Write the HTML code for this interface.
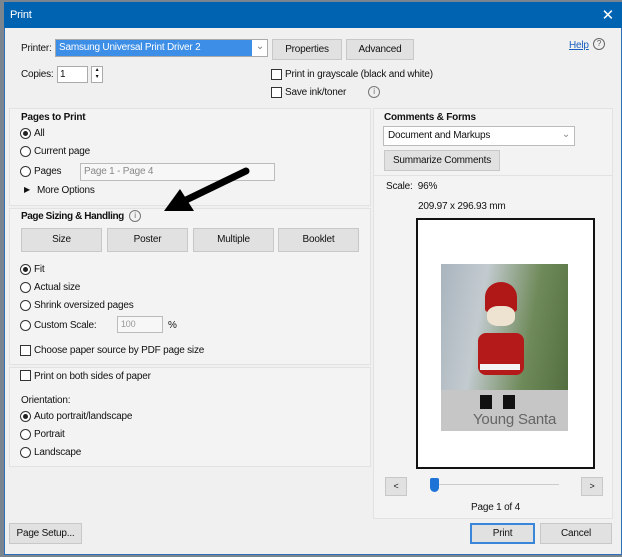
<!DOCTYPE html>
<html><head><style>
*{box-sizing:border-box;margin:0;padding:0}
body{width:622px;height:557px;background:#7a8590;font-family:"Liberation Sans",sans-serif;font-size:10px;letter-spacing:-0.2px;color:#111;position:relative;overflow:hidden}
.a{position:absolute}
.dlg{left:4px;top:2px;width:618px;height:553px;background:#f0f0f0;border:1px solid #2f6fb5}
.tb{left:4px;top:2px;width:618px;height:26px;background:#0063b1;color:#fff;font-size:11px;padding:7px 6px}
.panel{background:#f3f3f3;border:1px solid #e2e2e2}
.btn{background:#e1e1e1;border:1px solid #c8c8c8;text-align:center;line-height:20px}
.rad{width:11px;height:11px;border:1px solid #333;border-radius:50%;background:#fff}
.rad.on::after{content:"";position:absolute;left:2px;top:2px;width:5px;height:5px;border-radius:50%;background:#222}
.chk{width:11px;height:11px;border:1px solid #333;background:#fff}
.b{font-weight:bold}
</style></head><body>
<div class="a dlg"></div>
<div class="a tb">Print<span style="position:absolute;right:8px;top:4px;font-size:15px">✕</span></div>

<div class="a" style="left:21px;top:43px">Printer:</div>
<div class="a" style="left:55px;top:39px;width:213px;height:18px;background:#fff;border:1px solid #aaa"><div style="background:#3c8ee6;color:#fff;width:196px;height:16px;padding:2px 3px">Samsung Universal Print Driver 2</div><span class="a" style="right:3px;top:1px;color:#777">⌄</span></div>
<div class="a btn" style="left:272px;top:39px;width:70px;height:21px">Properties</div>
<div class="a btn" style="left:346px;top:39px;width:68px;height:21px">Advanced</div>
<div class="a" style="left:569px;top:40px;color:#1a5fc0;text-decoration:underline">Help</div>
<div class="a" style="left:593px;top:38px;width:12px;height:12px;border:1px solid #666;border-radius:50%;font-size:8px;text-align:center;line-height:10px;color:#555">?</div>

<div class="a" style="left:21px;top:69px">Copies:</div>
<div class="a" style="left:57px;top:66px;width:31px;height:17px;background:#fff;border:1px solid #aaa;padding:2px 2px">1</div>
<div class="a" style="left:91px;top:66px;width:12px;height:17px;background:#fff;border:1px solid #aaa;font-size:6px;text-align:center;line-height:7px">▴<br>▾</div>
<div class="a chk" style="left:271px;top:69px"></div><div class="a" style="left:285px;top:69px">Print in grayscale (black and white)</div>
<div class="a chk" style="left:271px;top:87px"></div><div class="a" style="left:285px;top:87px">Save ink/toner</div>
<div class="a" style="left:368px;top:86px;width:12px;height:12px;border:1px solid #777;border-radius:50%;font-size:8px;text-align:center;line-height:10px;color:#666">i</div>

<div class="a panel" style="left:9px;top:108px;width:362px;height:98px"></div>
<div class="a b" style="left:21px;top:112px">Pages to Print</div>
<div class="a rad on" style="left:20px;top:128px"></div><div class="a" style="left:34px;top:128px">All</div>
<div class="a rad" style="left:20px;top:146px"></div><div class="a" style="left:34px;top:146px">Current page</div>
<div class="a rad" style="left:20px;top:166px"></div><div class="a" style="left:34px;top:166px">Pages</div>
<div class="a" style="left:80px;top:163px;width:195px;height:18px;background:#f7f7f7;border:1px solid #bbb;padding:2px 3px;color:#888">Page 1 - Page 4</div>
<div class="a" style="left:24px;top:185px;font-size:8px">▶</div><div class="a" style="left:37px;top:185px">More Options</div>

<div class="a panel" style="left:9px;top:208px;width:362px;height:157px"></div>
<div class="a b" style="left:21px;top:211px;letter-spacing:-0.4px">Page Sizing &amp; Handling</div>
<div class="a" style="left:129px;top:210px;width:12px;height:12px;border:1px solid #777;border-radius:50%;font-size:8px;text-align:center;line-height:10px;color:#666">i</div>
<div class="a btn" style="left:21px;top:228px;width:81px;height:24px;line-height:22px">Size</div>
<div class="a btn" style="left:107px;top:228px;width:81px;height:24px;line-height:22px">Poster</div>
<div class="a btn" style="left:193px;top:228px;width:81px;height:24px;line-height:22px">Multiple</div>
<div class="a btn" style="left:278px;top:228px;width:81px;height:24px;line-height:22px">Booklet</div>
<div class="a rad on" style="left:20px;top:264px"></div><div class="a" style="left:34px;top:264px">Fit</div>
<div class="a rad" style="left:20px;top:282px"></div><div class="a" style="left:34px;top:282px">Actual size</div>
<div class="a rad" style="left:20px;top:300px"></div><div class="a" style="left:34px;top:300px">Shrink oversized pages</div>
<div class="a rad" style="left:20px;top:320px"></div><div class="a" style="left:34px;top:320px">Custom Scale:</div>
<div class="a" style="left:117px;top:316px;width:46px;height:17px;background:#f7f7f7;border:1px solid #bbb;padding:2px 3px;color:#999;font-size:9px">100</div>
<div class="a" style="left:168px;top:320px">%</div>
<div class="a chk" style="left:20px;top:345px"></div><div class="a" style="left:34px;top:345px">Choose paper source by PDF page size</div>

<div class="a panel" style="left:9px;top:367px;width:362px;height:100px"></div>
<div class="a chk" style="left:20px;top:370px"></div><div class="a" style="left:34px;top:371px">Print on both sides of paper</div>
<div class="a" style="left:21px;top:395px">Orientation:</div>
<div class="a rad on" style="left:20px;top:411px"></div><div class="a" style="left:34px;top:411px">Auto portrait/landscape</div>
<div class="a rad" style="left:20px;top:429px"></div><div class="a" style="left:34px;top:429px">Portrait</div>
<div class="a rad" style="left:20px;top:447px"></div><div class="a" style="left:34px;top:447px">Landscape</div>

<div class="a panel" style="left:373px;top:108px;width:240px;height:411px"></div>
<div class="a b" style="left:384px;top:112px">Comments &amp; Forms</div>
<div class="a" style="left:383px;top:126px;width:192px;height:20px;background:#fff;border:1px solid #bbb;padding:3px 4px">Document and Markups<span class="a" style="right:4px;top:2px;color:#888">⌄</span></div>
<div class="a btn" style="left:384px;top:150px;width:116px;height:21px">Summarize Comments</div>
<div class="a" style="left:374px;top:175px;width:238px;border-top:1px solid #e2e2e2"></div>
<div class="a" style="left:386px;top:181px">Scale:&nbsp; 96%</div>
<div class="a" style="left:418px;top:201px">209.97 x 296.93 mm</div>
<div class="a" style="left:416px;top:218px;width:179px;height:251px;background:#fff;border:2px solid #111"></div>
<div class="a" style="left:441px;top:264px;width:127px;height:167px;background:linear-gradient(100deg,#a9b4bd 0%,#c3cbd0 30%,#6f8a5a 65%,#4f6a3c 100%)"></div>
<div class="a" style="left:441px;top:390px;width:127px;height:41px;background:#c6c6c6"></div>
<div class="a" style="left:485px;top:282px;width:32px;height:30px;background:#b01818;border-radius:50% 50% 10% 10%"></div>
<div class="a" style="left:487px;top:306px;width:28px;height:20px;background:#eee2d0;border-radius:40%"></div>
<div class="a" style="left:478px;top:333px;width:46px;height:42px;background:#b51a1a;border-radius:8px"></div>
<div class="a" style="left:480px;top:364px;width:40px;height:6px;background:#f4f4f4"></div>
<div class="a" style="left:480px;top:395px;width:12px;height:14px;background:#111"></div>
<div class="a" style="left:503px;top:395px;width:12px;height:14px;background:#111"></div>
<div class="a" style="left:473px;top:411px;color:#666;font-size:15px">Young Santa</div>
<div class="a btn" style="left:385px;top:477px;width:22px;height:19px;line-height:17px;font-size:9px">&lt;</div>
<div class="a" style="left:431px;top:484px;width:128px;height:1px;background:#ccc"></div>
<div class="a" style="left:430px;top:478px;width:9px;height:14px;background:#1e73d6;border-radius:2px 2px 5px 5px"></div>
<div class="a btn" style="left:581px;top:477px;width:22px;height:19px;line-height:17px;font-size:9px">&gt;</div>
<div class="a" style="left:471px;top:502px">Page 1 of 4</div>

<div class="a btn" style="left:9px;top:523px;width:73px;height:21px">Page Setup...</div>
<div class="a btn" style="left:470px;top:523px;width:65px;height:21px;border:2px solid #3a86d8;line-height:17px">Print</div>
<div class="a btn" style="left:540px;top:523px;width:72px;height:21px">Cancel</div>

<svg class="a" style="left:160px;top:165px" width="92" height="52"><path d="M86 6 L24 36" stroke="#000" stroke-width="7" stroke-linecap="round"/><polygon points="4,46 34,46 20,24" fill="#000"/></svg>
</body></html>
